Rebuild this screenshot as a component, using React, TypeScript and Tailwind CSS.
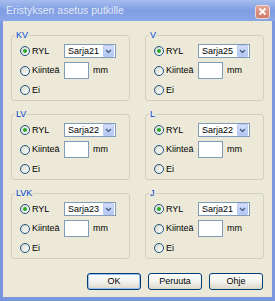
import React from "react";

type Group = { label: string; series: string };

const groups: Group[] = [
  { label: "KV", series: "Sarja21" },
  { label: "V", series: "Sarja25" },
  { label: "LV", series: "Sarja22" },
  { label: "L", series: "Sarja22" },
  { label: "LVK", series: "Sarja23" },
  { label: "J", series: "Sarja21" },
];

function Radio({ checked, label }: { checked?: boolean; label: string }) {
  return (
    <div className="flex items-center w-[44px] shrink-0">
      <span className="relative w-[10px] h-[10px] rounded-full border border-[#1c5180] bg-gradient-to-br from-[#d8d8d0] to-white flex items-center justify-center shrink-0">
        {checked && <span className="w-[4px] h-[4px] rounded-full bg-[#2aa82a]" />}
      </span>
      <span className="ml-[2px] text-[9px] leading-none text-black">{label}</span>
    </div>
  );
}

function Combo({ value }: { value: string }) {
  return (
    <div className="flex items-center w-[52px] h-[14px] border border-[#7f9db9] bg-white">
      <span className="flex-1 pl-[3px] text-[9px] leading-none text-black">{value}</span>
      <span className="w-[11px] h-[12px] mr-[1px] rounded-[1px] border border-[#b9c9ef] bg-gradient-to-b from-[#d3defa] to-[#b3c6f3] flex items-center justify-center">
        <svg width="7" height="5" viewBox="0 0 7 5">
          <path d="M1 1 L3.5 3.5 L6 1" stroke="#4d6185" strokeWidth="1.4" fill="none" />
        </svg>
      </span>
    </div>
  );
}

function GroupBox({ label, series }: Group) {
  return (
    <div className="relative w-[119px] h-[66px] rounded-[3px] border border-[#d0d0bf] pt-[8px] pl-[8px] flex flex-col">
      <span className="absolute left-[3px] top-[-6px] px-[1px] bg-[#ece9d8] text-[9px] leading-[10px] text-[#0046d5]">
        {label}
      </span>
      <div className="flex items-center h-[14px]">
        <Radio checked label="RYL" />
        <Combo value={series} />
      </div>
      <div className="flex items-center h-[17px] mt-[4px]">
        <Radio label="Kiinteä" />
        <div className="w-[25px] h-[17px] border border-[#7f9db9] bg-white" />
        <span className="ml-[4px] text-[9px] leading-none text-black">mm</span>
      </div>
      <div className="flex items-center h-[16px] mt-[3px]">
        <Radio label="Ei" />
      </div>
    </div>
  );
}

function Button({ label, primary }: { label: string; primary?: boolean }) {
  return (
    <div
      className={`w-[54px] h-[17px] rounded-[3px] border border-[#003c74] bg-gradient-to-b from-white via-[#f3f3ee] to-[#dcd7cb] flex items-center justify-center text-[9px] leading-none text-black ${
        primary ? "shadow-[inset_0_0_0_1px_#9dbff0]" : ""
      }`}
    >
      {label}
    </div>
  );
}

export default function App() {
  return (
    <div
      className="w-[275px] h-[301px] flex flex-col overflow-hidden bg-[#7a96df]"
      style={{ fontFamily: "'Liberation Sans', Arial, sans-serif" }}
    >
      <div className="h-[21px] shrink-0 flex items-center pl-[6px] pr-[5px] bg-gradient-to-b from-[#a7bdee] via-[#7f9de3] to-[#8aa7e8]">
        <span className="flex-1 text-[10.5px] leading-none text-[#e2e9f8]">Eristyksen asetus putkille</span>
        <span className="w-[15px] h-[14px] mt-[2px] rounded-[3px] border border-[#f1d9d2] bg-gradient-to-b from-[#e3a497] to-[#cf7a68] flex items-center justify-center">
          <svg width="9" height="9" viewBox="0 0 9 9">
            <path d="M1.5 1.5 L7.5 7.5 M7.5 1.5 L1.5 7.5" stroke="white" strokeWidth="1.8" />
          </svg>
        </span>
      </div>
      <div className="flex-1 mx-[3px] mb-[4px] bg-[#ece9d8] pt-[14px] pl-[8px] pr-[9px] flex flex-col">
        <div className="grid grid-cols-[119px_119px] gap-x-[15px] gap-y-[13px]">
          {groups.map((g) => (
            <GroupBox key={g.label} {...g} />
          ))}
        </div>
        <div className="flex justify-end gap-[7px] mt-[14px]">
          <Button label="OK" primary />
          <Button label="Peruuta" />
          <Button label="Ohje" />
        </div>
      </div>
    </div>
  );
}
